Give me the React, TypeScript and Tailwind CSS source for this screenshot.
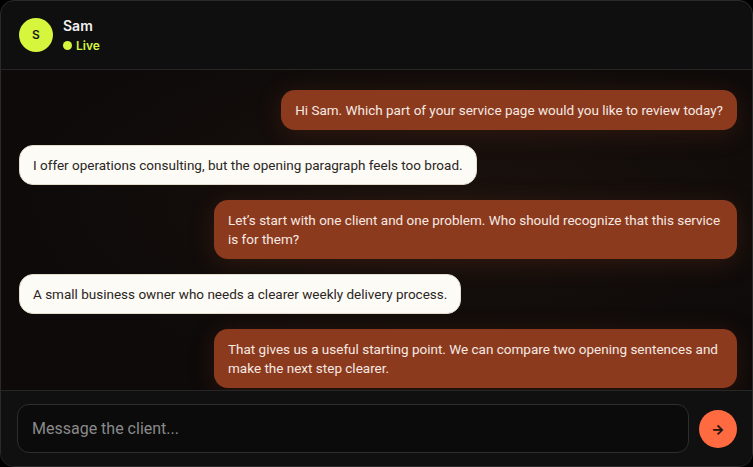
const messages: { from: "me" | "client"; text: string }[] = [
  { from: "me", text: "Hi Sam. Which part of your service page would you like to review today?" },
  { from: "client", text: "I offer operations consulting, but the opening paragraph feels too broad." },
  {
    from: "me",
    text: "Let\u2019s start with one client and one problem. Who should recognize that this service is for them?",
  },
  { from: "client", text: "A small business owner who needs a clearer weekly delivery process." },
  {
    from: "me",
    text: "That gives us a useful starting point. We can compare two opening sentences and make the next step clearer.",
  },
];

export default function App() {
  return (
    <div className="h-[467px] w-[753px] bg-black" style={{ fontFamily: "Roboto, 'Noto Sans', sans-serif" }}>
      <div className="flex h-full flex-col overflow-hidden rounded-[14px] border border-[#2a2a2a] bg-[#0f0f0f]">
        {/* Header */}
        <div
          className="flex h-[69px] shrink-0 items-center gap-[10px] border-b border-[#262626] px-[18px]"
          style={{ fontFamily: "Inter, sans-serif" }}
        >
          <div className="flex h-[34px] w-[34px] items-center justify-center rounded-full bg-[#d6f53d] text-[12px] font-semibold text-[#1a1a1a]">
            S
          </div>
          <div className="flex flex-col">
            <span className="text-[14px] font-semibold leading-[18px] text-[#f2f2f2]">Sam</span>
            <span className="mt-[3px] flex items-center gap-[4px] text-[12px] font-semibold leading-[16px] text-[#d6f53d]">
              <span className="h-[9px] w-[9px] rounded-full bg-[#d6f53d]" />
              Live
            </span>
          </div>
        </div>

        {/* Messages */}
        <div className="flex min-h-0 flex-1 flex-col gap-[15px] overflow-hidden bg-[radial-gradient(ellipse_at_60%_40%,#1a110d_0%,#0d0a09_70%)] pb-4 pl-[18px] pr-[15px] pt-[20px]">
          {messages.map((m, i) =>
            m.from === "me" ? (
              <div
                key={i}
                className="max-w-[523px] self-end rounded-[14px] bg-[#8b3a1e] px-[14px] py-[10.5px] text-[13.5px] leading-[19px] text-[#f6e9e2] shadow-[0_4px_24px_rgba(139,58,30,0.25)]"
              >
                {m.text}
              </div>
            ) : (
              <div
                key={i}
                className="max-w-[523px] self-start rounded-[14px] border border-[#e4dccd] bg-[#fdfbf6] px-[13px] py-[9.5px] text-[13.5px] leading-[19px] text-[#2a2623]"
              >
                {m.text}
              </div>
            )
          )}
        </div>

        {/* Composer */}
        <div className="flex h-[76px] shrink-0 items-center gap-[10px] border-t border-[#262626] bg-[#101010] pl-4 pr-[15px]">
          <div className="flex h-[49px] flex-1 items-center rounded-[12px] border border-[#2e2e2e] bg-[#0b0b0b] px-[14px]">
            <span className="text-[16px] text-[#8a8a8a]">Message the client...</span>
          </div>
          <button
            className="flex h-[38px] w-[38px] items-center justify-center rounded-full bg-[#ff6a40] text-[14px] font-extrabold text-[#2a1208]"
            style={{ fontFamily: "Inter, sans-serif" }}
          >
            →
          </button>
        </div>
      </div>
    </div>
  );
}
